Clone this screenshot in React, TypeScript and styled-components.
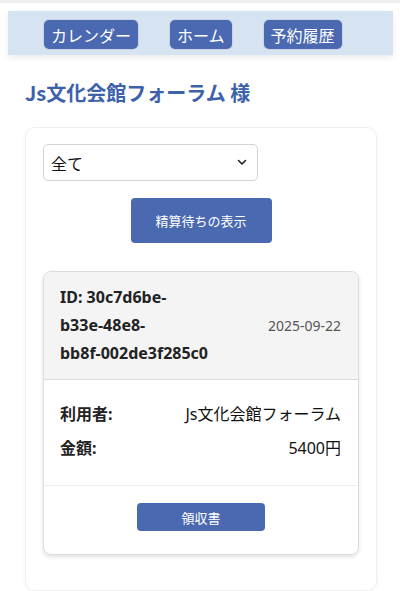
import React from "react";
import styled, { createGlobalStyle } from "styled-components";

const GlobalStyle = createGlobalStyle`
  html, body { margin: 0; padding: 0; background: #ffffff; }
  body { font-family: "Noto Sans", "Noto Sans CJK JP", sans-serif; color: #222; }
  * { box-sizing: border-box; }
`;

const TopEdge = styled.div`
  height: 3px;
  background: #eeeeee;
`;

const Page = styled.div`
  padding: 8px 7px 0 8px;
`;

const NavBar = styled.nav`
  display: flex;
  align-items: flex-start;
  gap: 30px;
  height: 44px;
  padding: 8px 0 0 35px;
  background: #d6e3f0;
  box-shadow: 0 3px 6px rgba(0, 0, 0, 0.08);
`;

const NavButton = styled.button`
  height: 31px;
  padding: 0 7px;
  border: 1px solid rgba(255, 255, 255, 0.7);
  border-radius: 6px;
  background: #4a69b0;
  color: #ffffff;
  font-family: "Noto Sans CJK JP", sans-serif;
  font-size: 16px;
  line-height: 1;
  cursor: pointer;
`;

const Title = styled.h2`
  margin: 23px 0 0 17px;
  font-family: "Noto Sans CJK JP", sans-serif;
  font-size: 20px;
  font-weight: 700;
  line-height: 30px;
  color: #3d61ab;
`;

const Panel = styled.section`
  margin: 19px 16px 0 17px;
  padding: 16px 17px 35px;
  border: 1px solid #f0f0f0;
  border-radius: 10px;
  box-shadow: 0 1px 4px rgba(0, 0, 0, 0.05);
  display: flex;
  flex-direction: column;
`;

const SelectBox = styled.div`
  width: 215px;
  height: 37px;
  border: 1px solid #d4d4d4;
  border-radius: 5px;
  display: flex;
  align-items: center;
  justify-content: space-between;
  padding: 0 10px 0 7px;
  font-family: "Noto Sans CJK JP", sans-serif;
  font-size: 16px;
  color: #111;
`;

const PrimaryButton = styled.button`
  align-self: center;
  margin-top: 17px;
  width: 141px;
  height: 45px;
  border: none;
  border-radius: 4px;
  background: #4a69b0;
  color: #fff;
  font-family: "Noto Sans CJK JP", sans-serif;
  font-size: 13px;
`;

const Card = styled.article`
  margin-top: 28px;
  border: 1px solid #dcdcdc;
  border-radius: 8px;
  overflow: hidden;
  box-shadow: 0 2px 4px rgba(0, 0, 0, 0.12);
`;

const CardHeader = styled.div`
  display: flex;
  align-items: center;
  justify-content: space-between;
  padding: 11px 16px 12px;
  background: #f4f4f4;
  border-bottom: 1px solid #dddddd;
`;

const IdText = styled.div`
  max-width: 180px;
  font-size: 16px;
  font-weight: 700;
  line-height: 28px;
  color: #222;
`;

const NoWrap = styled.span`
  white-space: nowrap;
`;

const DateText = styled.div`
  font-size: 14px;
  color: #555;
  margin-right: 1px;
`;

const CardBody = styled.div`
  padding: 12px 16px 15px;
  border-bottom: 1px solid #eeeeee;
`;

const Row = styled.div`
  display: flex;
  justify-content: space-between;
  align-items: center;
  margin: 10px 0;
  line-height: 24px;
  font-size: 16px;
`;

const Label = styled.span`
  font-weight: 700;
  color: #222;
`;

const Value = styled.span`
  color: #111;
  margin-right: 1px;
`;

const CardFooter = styled.div`
  display: flex;
  justify-content: center;
  padding: 17px 16px 23px;
`;

const SmallButton = styled.button`
  width: 128px;
  height: 28px;
  border: none;
  border-radius: 4px;
  background: #4a69b0;
  color: #fff;
  font-family: "Noto Sans CJK JP", sans-serif;
  font-size: 13px;
`;

const Chevron = () => (
  <svg width="10" height="7" viewBox="0 0 10 7" fill="none">
    <path d="M1.5 1.5 L5 5 L8.5 1.5" stroke="#222" strokeWidth="1.6" strokeLinecap="round" strokeLinejoin="round" />
  </svg>
);

export default function App() {
  return (
    <>
      <GlobalStyle />
      <TopEdge />
      <Page>
        <NavBar>
          <NavButton>カレンダー</NavButton>
          <NavButton>ホーム</NavButton>
          <NavButton>予約履歴</NavButton>
        </NavBar>
        <Title>Js文化会館フォーラム 様</Title>
        <Panel>
          <SelectBox>
            <span>全て</span>
            <Chevron />
          </SelectBox>
          <PrimaryButton>精算待ちの表示</PrimaryButton>
          <Card>
            <CardHeader>
              <IdText>
                ID: 30c7d6be-<NoWrap>b33e-48e8-</NoWrap>
                <NoWrap>bb8f-002de3f285c0</NoWrap>
              </IdText>
              <DateText>2025-09-22</DateText>
            </CardHeader>
            <CardBody>
              <Row>
                <Label>利用者:</Label>
                <Value>Js文化会館フォーラム</Value>
              </Row>
              <Row>
                <Label>金額:</Label>
                <Value>5400円</Value>
              </Row>
            </CardBody>
            <CardFooter>
              <SmallButton>領収書</SmallButton>
            </CardFooter>
          </Card>
        </Panel>
      </Page>
    </>
  );
}
